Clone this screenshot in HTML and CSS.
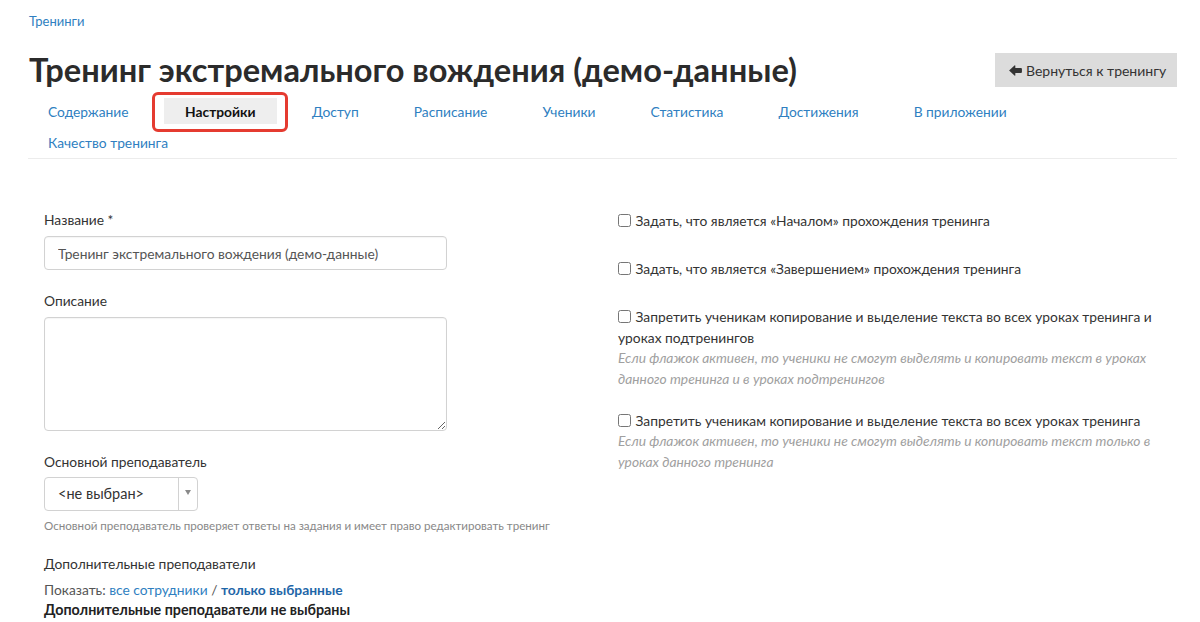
FILE: index.html
```html
<!DOCTYPE html>
<html lang="ru">
<head>
<meta charset="utf-8">
<title>Тренинг экстремального вождения (демо-данные)</title>
<link rel="stylesheet" href="styles.css">
</head>
<body>
<div class="page">
  <div class="crumbs"><a href="#">Тренинги</a></div>
  <div class="head">
    <h1>Тренинг экстремального вождения (демо-данные)</h1>
    <a class="btn-back" href="#"><svg class="ico-back" viewBox="0 0 14 12" width="13" height="11"><path d="M0 6 L6.2 0.4 Q6.8 0 6.8 0.8 L6.8 3.4 L13 3.4 Q14 3.4 14 4.4 L14 7.6 Q14 8.6 13 8.6 L6.8 8.6 L6.8 11.2 Q6.8 12 6.2 11.6 Z" fill="#333"/></svg>Вернуться к тренингу</a>
  </div>
  <ul class="nav">
    <li><a href="#">Содержание</a></li>
    <li class="active"><a href="#">Настройки</a></li>
    <li><a href="#">Доступ</a></li>
    <li><a href="#">Расписание</a></li>
    <li><a href="#">Ученики</a></li>
    <li><a href="#">Статистика</a></li>
    <li><a href="#">Достижения</a></li>
    <li><a href="#">В приложении</a></li>
    <li class="break"></li>
    <li><a href="#">Качество тренинга</a></li>
  </ul>
  <div class="form-row">
    <div class="col">
      <div class="group">
        <label class="lbl">Название *</label>
        <input class="field" type="text" value="Тренинг экстремального вождения (демо-данные)">
      </div>
      <div class="group">
        <label class="lbl">Описание</label>
        <textarea class="field area"></textarea>
      </div>
      <div class="group teacher">
        <label class="lbl">Основной преподаватель</label>
        <div class="select">
          <span class="select-val">&lt;не выбран&gt;</span>
          <span class="select-arrow"><span class="tri"></span></span>
        </div>
        <div class="hint">Основной преподаватель проверяет ответы на задания и имеет право редактировать тренинг</div>
      </div>
      <div class="group last">
        <label class="lbl">Дополнительные преподаватели</label>
        <div class="show">Показать: <a href="#">все сотрудники</a> / <a class="strong" href="#">только выбранные</a></div>
        <div class="none">Дополнительные преподаватели не выбраны</div>
      </div>
    </div>
    <div class="col right">
      <div class="check c1"><label><input type="checkbox"> Задать, что является «Началом» прохождения тренинга</label></div>
      <div class="check c2"><label><input type="checkbox"> Задать, что является «Завершением» прохождения тренинга</label></div>
      <div class="check c3"><label><input type="checkbox"> Запретить ученикам копирование и выделение текста во всех уроках тренинга и уроках подтренингов</label>
        <div class="note">Если флажок активен, то ученики не смогут выделять и копировать текст в уроках данного тренинга и в уроках подтренингов</div></div>
      <div class="check c4"><label><input type="checkbox"> Запретить ученикам копирование и выделение текста во всех уроках тренинга</label>
        <div class="note">Если флажок активен, то ученики не смогут выделять и копировать текст только в уроках данного тренинга</div></div>
    </div>
  </div>
</div>
</body>
</html>
```
FILE: styles.css
```css
* { box-sizing: border-box; }
html, body { margin: 0; padding: 0; background: #fff; }
body {
  font-family: "Lato", "Liberation Sans", sans-serif;
  font-size: 13.8px;
  color: #333;
}
a { color: #2f7fc1; text-decoration: none; }

.page { padding: 12px 23px 0 29px; }

.crumbs { font-size: 13px; line-height: 18px; }

.head {
  margin-top: 23px;
  display: flex;
  align-items: center;
  justify-content: space-between;
  height: 34px;
}
.head h1 {
  margin: 0;
  font-size: 32.6px;
  line-height: 34px;
  font-weight: 700;
  color: #2b2b2b;
  white-space: nowrap;
}
.btn-back {
  display: flex;
  align-items: center;
  gap: 4px;
  height: 34px;
  width: 182px;
  padding: 0 13px 0 14px;
  background: #dcdcdc;
  color: #333;
  font-size: 14px;
  white-space: nowrap;
}
.ico-back { display: block; flex: none; }

.nav {
  list-style: none;
  margin: 11px 0 0 -1px;
  padding: 0 0 3px 0;
  display: flex;
  flex-wrap: wrap;
  column-gap: 15px;
  row-gap: 0;
  border-bottom: 1px solid #ececec;
}
.nav li { position: relative; }
.nav li.break { flex-basis: 100%; height: 5px; }
.nav a {
  display: block;
  padding: 0 20px;
  height: 26px;
  line-height: 28px;
  font-size: 13.8px;
  overflow: hidden;
}
.nav li.active a { background: #eeeeee; color: #111; font-weight: 700; padding: 0 21.5px; }
.nav li.active::after {
  content: "";
  position: absolute;
  left: -12px; right: -11px; top: -6px; bottom: -8px;
  border: 3.5px solid #e53b30;
  border-radius: 6px;
  pointer-events: none;
}

.form-row { display: flex; padding-top: 51px; }
.col { width: 574px; padding: 0 15px; }
.col.right { padding-top: 0; }

.group { margin-bottom: 21px; }
.lbl { display: block; line-height: 20px; margin-bottom: 6px; color: #333; }
.field {
  display: block;
  width: 403px;
  height: 34px;
  padding: 6px 13px;
  border: 1px solid #d2d2d2;
  border-radius: 4px;
  font-family: inherit;
  font-size: 13.8px;
  color: #555;
  box-shadow: inset 0 1px 1px rgba(0,0,0,.04);
}
.area { height: 114px; resize: vertical; }

.select {
  display: flex;
  width: 154px;
  height: 34px;
  border: 1px solid #d2d2d2;
  border-radius: 4px;
  margin-top: -1px;
}
.select-val { flex: 1; padding-left: 13px; line-height: 32px; font-size: 14.5px; color: #333; }
.select-arrow {
  width: 19px;
  border-left: 1px solid #d2d2d2;
  display: flex;
  align-items: center;
  justify-content: center;
}
.tri {
  width: 0; height: 0;
  border-left: 3px solid transparent;
  border-right: 3px solid transparent;
  border-top: 5px solid #8a8a8a;
  margin-top: -4px;
}
.hint { margin-top: 8px; font-size: 11.6px; line-height: 14px; color: #888; }
.teacher { margin-bottom: 21px; }

.show { line-height: 20px; color: #555; }
.show .strong { font-weight: 700; color: #1e66a8; }
.none { line-height: 19px; font-weight: 700; color: #222; font-size: 14.3px; }

.check { line-height: 21px; color: #333; }
.check label { cursor: pointer; }
.check input {
  margin: 0 1px 0 0;
  width: 13px; height: 13px;
  vertical-align: -1px;
}
.c1 { margin-bottom: 27px; }
.c2 { margin-bottom: 27px; }
.c3 { margin-bottom: 21px; }
.note { font-style: italic; color: #a0a0a0; line-height: 20.5px; }
```
